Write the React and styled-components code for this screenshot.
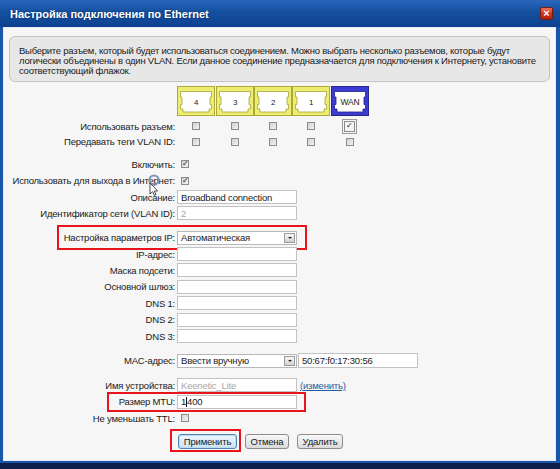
import React from 'react';
import styled, { createGlobalStyle, css } from 'styled-components';

const Global = createGlobalStyle`
  html, body { margin: 0; padding: 0; background: #0b1f48; }
  body {
    width: 560px; height: 469px; overflow: hidden;
    font-family: "Liberation Sans", Arial, sans-serif;
  }
`;

const Window = styled.div`
  position: relative;
  width: 560px;
  height: 463px;
  box-sizing: border-box;
  padding: 0 4px 2px 3px;
  display: flex;
  flex-direction: column;
  background: linear-gradient(180deg, #2a66bd 0px, #15509f 12px, #0d4190 27px, #1b55aa 27px, #1b55aa 100%);
`;

const TitleBar = styled.div`
  height: 27px;
  flex: none;
  display: flex;
  align-items: center;
  justify-content: space-between;
  padding: 0 3px 0 7px;
`;

const Title = styled.span`
  color: #fff;
  font-weight: bold;
  font-size: 11px;
  text-shadow: 0 0 2px rgba(0, 20, 60, 0.6);
`;

const CloseButton = styled.span`
  width: 13px;
  height: 13px;
  margin-top: -1px;
  box-sizing: border-box;
  border: 1px solid #7a1a10;
  border-radius: 2px;
  background: linear-gradient(180deg, #f07058, #c8341c 55%, #b02410);
  color: #fff;
  font-size: 11px;
  font-weight: bold;
  line-height: 11px;
  text-align: center;
`;

const Content = styled.div`
  position: relative;
  flex: 1;
  background: #f6f6f6;
  border: 1px solid #e4ebf4;
  display: flex;
  flex-direction: column;
`;

const InfoBox = styled.div`
  margin: 8px 5px 0 5px;
  height: 46px;
  box-sizing: border-box;
  padding: 9px 9px 5px 9px;
  background: #e7e7e7;
  border: 1px solid #c4c4c4;
  border-radius: 6px;
  font-size: 9.5px;
  letter-spacing: -0.25px;
  line-height: 10px;
  color: #1a1a1a;
  white-space: nowrap;
`;

const Form = styled.div`
  margin-top: 4px;
  display: flex;
  flex-direction: column;
  font-size: 9.5px;
  letter-spacing: -0.2px;
  color: #1a1a1a;
`;

const Row = styled.div`
  position: relative;
  display: grid;
  grid-template-columns: 173px auto;
  align-items: center;
  height: ${p => p.$h || 16}px;
  margin-top: ${p => p.$mt || 0}px;
`;

const Label = styled.span`
  text-align: right;
  padding-right: 2px;
  white-space: nowrap;
`;

const Field = styled.div`
  display: flex;
  align-items: center;
  gap: ${p => p.$gap || 0}px;
`;

const Mark = styled.span`
  position: absolute;
  left: ${p => p.$x}px;
  top: ${p => p.$y}px;
  width: ${p => p.$w}px;
  height: ${p => p.$hh}px;
  box-sizing: border-box;
  border: 2px solid #e8141c;
  pointer-events: none;
`;

const PortGrid = styled.div`
  display: grid;
  grid-template-columns: repeat(5, 38.4px);
  align-items: ${p => (p.$top ? 'start' : 'center')};
  justify-items: center;
  height: 100%;
`;

const Check = styled.span`
  display: inline-flex;
  align-items: center;
  justify-content: center;
  box-sizing: border-box;
  width: 8px;
  height: 8px;
  margin-left: ${p => p.$ml || 0}px;
  border: 1px solid #8c8c8c;
  background: linear-gradient(135deg, #d2d2d2, #f2f2f2);
  font-size: 8px;
  line-height: 8px;
  letter-spacing: 0;
  color: #222;
  ${p => p.$focus && css`
    width: 11px;
    height: 11px;
    outline: 1px solid #9a9a9a;
    outline-offset: 1px;
    background: #f4f4f4;
  `}
`;

const Input = styled.div`
  width: ${p => p.$w || 120}px;
  height: ${p => p.$h || 14}px;
  box-sizing: border-box;
  border: 1px solid #c2c2c2;
  background: #fff;
  padding-left: 3px;
  display: flex;
  align-items: center;
  white-space: nowrap;
  color: ${p => (p.$muted ? '#a8a8a8' : '#1a1a1a')};
`;

const Caret = styled.span`
  display: inline-block;
  width: 1px;
  height: 10px;
  background: #111;
`;

const Select = styled.div`
  width: 120px;
  height: 14px;
  box-sizing: border-box;
  border: 1px solid #b8b8b8;
  background: #fff;
  padding-left: 3px;
  display: flex;
  align-items: center;
  white-space: nowrap;
`;

const DropButton = styled.span`
  margin-left: auto;
  margin-right: 1px;
  width: 11px;
  height: 10px;
  box-sizing: border-box;
  border: 1px solid #9a9a9a;
  background: linear-gradient(180deg, #f6f6f6, #d2d2d2);
  display: flex;
  align-items: center;
  justify-content: center;
  &::after {
    content: '';
    border-left: 2px solid transparent;
    border-right: 2px solid transparent;
    border-top: 2px solid #222;
  }
`;

const Link = styled.span`
  margin-left: 3px;
  color: #1f5b9e;
  text-decoration: underline;
`;

const Button = styled.span`
  width: ${p => p.$w}px;
  height: 15px;
  box-sizing: border-box;
  display: flex;
  align-items: center;
  justify-content: center;
  border: 1px solid #8c8c8c;
  border-radius: 3px;
  background: linear-gradient(180deg, #f8f8f8, #dadada);
  color: #1a1a1a;
  ${p => p.$primary && css`
    margin-left: 1px;
    border-color: #4f86b4;
    background: linear-gradient(180deg, #eef6fc, #cde2f0);
    box-shadow: inset 0 0 0 1px #bcdcef;
  `}
`;

const Cursor = styled.svg`
  position: absolute;
  left: 141px;
  top: 146px;
  pointer-events: none;
`;

/* RJ45 socket drawing for a switch port */
function Port({ name, wan }) {
  return (
    <svg width="38" height="30" viewBox="0 0 38 30">
      <rect x="0.5" y="0.5" width="37" height="29"
        fill={wan ? '#3c3cd2' : '#eded72'} stroke={wan ? '#26268e' : '#ada83c'} />
      <path d="M3.5 5.5H34.5V11H33V18.5H34.5V23H32V26H6V23H3.5V18.5H5V11H3.5Z"
        fill="#fff" stroke={wan ? '#202085' : '#a8a33a'} strokeWidth="0.8" />
      <text x="19" y="19" textAnchor="middle" fontSize={wan ? 8.5 : 8}
        fontFamily="Liberation Sans, Arial, sans-serif" fill="#222">{name}</text>
    </svg>
  );
}

const ports = ['4', '3', '2', '1', 'WAN'];

function FieldRow({ label, children, ...rest }) {
  return (
    <Row {...rest}>
      <Label>{label}</Label>
      <Field>{children}</Field>
    </Row>
  );
}

export default function App() {
  return (
    <>
      <Global />
      <Window>
        <TitleBar>
          <Title>Настройка подключения по Ethernet</Title>
          <CloseButton>×</CloseButton>
        </TitleBar>
        <Content>
          <InfoBox>
            Выберите разъем, который будет использоваться соединением. Можно выбрать несколько разъемов, которые будут<br />
            логически объединены в один VLAN. Если данное соединение предназначается для подключения к Интернету, установите<br />
            соответствующий флажок.
          </InfoBox>
          <Form>
            <Row $h={32}>
              <span />
              <PortGrid $top>
                {ports.map(p => <Port key={p} name={p} wan={p === 'WAN'} />)}
              </PortGrid>
            </Row>
            <Row $h={16}>
              <Label>Использовать разъем:</Label>
              <PortGrid>
                {ports.map(p => p === 'WAN'
                  ? <Check key={p} $focus>✓</Check>
                  : <Check key={p} />)}
              </PortGrid>
            </Row>
            <Row $h={15}>
              <Label>Передавать теги VLAN ID:</Label>
              <PortGrid>
                {ports.map(p => <Check key={p} />)}
              </PortGrid>
            </Row>

            <FieldRow label="Включить:" $mt={7}><Check $ml={4}>✓</Check></FieldRow>
            <FieldRow label="Использовать для выхода в Интернет:" $h={17}><Check $ml={4}>✓</Check></FieldRow>
            <FieldRow label="Описание:"><Input>Broadband connection</Input></FieldRow>
            <FieldRow label="Идентификатор сети (VLAN ID):"><Input $muted>2</Input></FieldRow>

            <Row $h={17} $mt={8}>
              <Label>Настройка параметров IP:</Label>
              <Field>
                <Select>Автоматическая<DropButton /></Select>
              </Field>
              <Mark $x={53} $y={-4} $w={250} $hh={25} />
            </Row>
            <FieldRow label="IP-адрес:"><Input /></FieldRow>
            <FieldRow label="Маска подсети:" $h={16.5}><Input /></FieldRow>
            <FieldRow label="Основной шлюз:" $h={16.5}><Input /></FieldRow>
            <FieldRow label="DNS 1:" $h={16.5}><Input /></FieldRow>
            <FieldRow label="DNS 2:" $h={16.5}><Input /></FieldRow>
            <FieldRow label="DNS 3:" $h={16.5}><Input /></FieldRow>

            <Row $h={16} $mt={8}>
              <Label>MAC-адрес:</Label>
              <Field $gap={1}>
                <Select>Ввести вручную<DropButton /></Select>
                <Input $h={15}>50:67:f0:17:30:56</Input>
              </Field>
            </Row>
            <FieldRow label="Имя устройства:" $mt={8.5}>
              <Input $muted>Keenetic_Lite</Input>
              <Link>(изменить)</Link>
            </FieldRow>
            <Row $h={17}>
              <Label>Размер MTU:</Label>
              <Field>
                <Input>1<Caret />400</Input>
              </Field>
              <Mark $x={103} $y={-1} $w={199} $hh={20} />
            </Row>
            <FieldRow label="Не уменьшать TTL:"><Check $ml={4} /></FieldRow>

            <Row $h={15} $mt={8}>
              <span />
              <Field $gap={8}>
                <Button $w={59} $primary>Применить</Button>
                <Button $w={44}>Отмена</Button>
                <Button $w={46}>Удалить</Button>
              </Field>
              <Mark $x={166} $y={-5} $w={71} $hh={23} />
            </Row>
          </Form>

          <Cursor width="18" height="22" viewBox="0 0 18 22">
            <circle cx="9" cy="6" r="4.5" fill="none" stroke="#7d95b8" strokeWidth="2.2" />
            <path d="M5 9L5 20L7.6 17.6L9.4 21.4L11 20.6L9.3 17H12.6Z"
              fill="#fff" stroke="#222" strokeWidth="0.8" strokeLinejoin="round" />
          </Cursor>
        </Content>
      </Window>
    </>
  );
}
